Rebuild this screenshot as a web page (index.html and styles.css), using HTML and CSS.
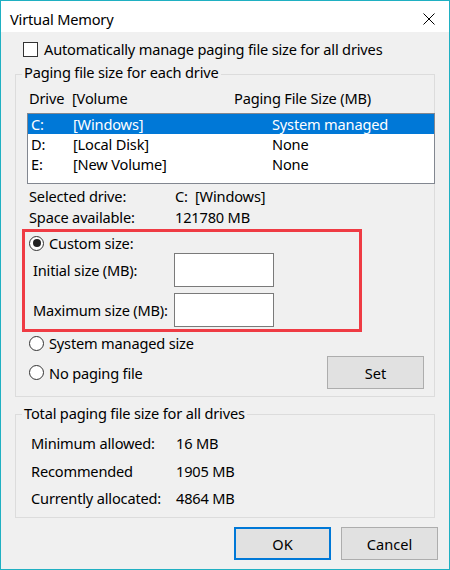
FILE: index.html
```html
<!DOCTYPE html>
<html>
<head>
    <meta charset="UTF-8">
    <title>Virtual Memory</title>
    <link rel="stylesheet" href="styles.css">
</head>
<body>
    <div class="window">
        <div class="titlebar">
            <span class="title">Virtual Memory</span>
            <svg class="close" width="12" height="12" viewBox="0 0 12 12">
                <path d="M0.5 0.5 L11.5 11.5 M11.5 0.5 L0.5 11.5" stroke="#000" stroke-width="1" fill="none"/>
            </svg>
        </div>

        <div class="dialog">
            <label class="check-row">
                <span class="checkbox"></span>
                Automatically manage paging file size for all drives
            </label>

            <fieldset class="group drives">
                <legend>Paging file size for each drive</legend>

                <div class="list-head">
                    <span>Drive</span>
                    <span>[Volume</span>
                    <span>Paging File Size (MB)</span>
                </div>

                <div class="listbox">
                    <div class="list-row selected">
                        <span>C:</span><span>[Windows]</span><span>System managed</span>
                    </div>
                    <div class="list-row">
                        <span>D:</span><span>[Local Disk]</span><span>None</span>
                    </div>
                    <div class="list-row">
                        <span>E:</span><span>[New Volume]</span><span>None</span>
                    </div>
                </div>

                <div class="info-row">
                    <span>Selected drive:</span>
                    <span>C:&nbsp;&nbsp;[Windows]</span>
                </div>
                <div class="info-row">
                    <span>Space available:</span>
                    <span>121780 MB</span>
                </div>

                <div class="custom-box">
                    <div class="radio-row custom">
                        <span class="radio checked"></span>
                        Custom size:
                    </div>
                    <div class="size-row">
                        <span class="size-label">Initial size (MB):</span>
                        <input class="size-input" type="text">
                    </div>
                    <div class="size-row">
                        <span class="size-label">Maximum size (MB):</span>
                        <input class="size-input" type="text">
                    </div>
                </div>

                <div class="radio-row system">
                    <span class="radio"></span>
                    System managed size
                </div>
                <div class="set-row">
                    <div class="radio-row">
                        <span class="radio"></span>
                        No paging file
                    </div>
                    <button class="btn set-btn">Set</button>
                </div>
            </fieldset>

            <fieldset class="group totals">
                <legend>Total paging file size for all drives</legend>
                <div class="total-rows">
                    <span>Minimum allowed:</span><span>16 MB</span>
                    <span>Recommended</span><span>1905 MB</span>
                    <span>Currently allocated:</span><span>4864 MB</span>
                </div>
            </fieldset>

            <div class="buttons">
                <button class="btn default">OK</button>
                <button class="btn">Cancel</button>
            </div>
        </div>
    </div>
</body>
</html>
```

FILE: styles.css
```css
body {
    margin: 0;
    padding: 0;
    font-family: "Segoe UI", "Noto Sans", "Open Sans", sans-serif;
    font-size: 14.6px;
    letter-spacing: -0.18px;
    line-height: 20px;
    color: #000;
}

.window {
    width: 450px;
    height: 570px;
    box-sizing: border-box;
    border: 1px solid #1fb0c2;
    background-color: #f0f0f0;
}

/* title bar */
.titlebar {
    display: flex;
    justify-content: space-between;
    align-items: center;
    height: 31px;
    box-sizing: border-box;
    padding: 4px 14px 0 9px;
    background-color: #fff;
}

.close {
    display: block;
}

.dialog {
    padding: 0 14px;
}

.check-row {
    display: flex;
    align-items: center;
    height: 20px;
    margin-top: 7px;
    padding-left: 8px;
}

.checkbox {
    width: 13px;
    height: 13px;
    border: 1px solid #333;
    background-color: #fff;
    margin-right: 6px;
}

/* group boxes */
.group {
    margin: 3px 0 0 0;
    padding: 0;
    border: 1px solid #dcdcdc;
    min-width: 0;
}

.group legend {
    margin-left: 6px;
    padding: 0 2px 4px 2px;
    line-height: 20px;
}

.list-head,
.list-row {
    display: grid;
    height: 20px;
    white-space: nowrap;
}

.list-head {
    margin: 2px 0 0 13px;
    grid-template-columns: 43px 162px 1fr;
}

.listbox {
    margin: 5px -1px 0 11px;
    height: 71px;
    box-sizing: border-box;
    border: 1px solid #828790;
    background-color: #fff;
}

.list-row {
    padding-left: 3px;
    grid-template-columns: 42px 199px 1fr;
}

.list-row.selected {
    background-color: #0078d7;
    color: #fff;
}

.info-row {
    display: grid;
    grid-template-columns: 146px 1fr;
    height: 21px;
    padding-left: 13px;
}

.listbox + .info-row {
    margin-top: 2px;
}

/* custom size box */
.custom-box {
    width: 340px;
    box-sizing: border-box;
    margin: 1px 0 0 6px;
    padding: 1px 0 2px 8px;
    border: 3px solid #ef3b44;
}

.radio-row {
    display: flex;
    align-items: center;
    height: 20px;
    white-space: nowrap;
}

.radio-row.custom {
    margin-left: -4px;
}

.radio {
    position: relative;
    width: 13px;
    height: 13px;
    border: 1px solid #333;
    border-radius: 50%;
    background-color: #fff;
    margin-right: 5px;
}

.radio.checked::after {
    content: "";
    position: absolute;
    left: 2.5px;
    top: 2.5px;
    width: 8px;
    height: 8px;
    border-radius: 50%;
    background-color: #222;
}

.size-row {
    display: flex;
    align-items: center;
    height: 34px;
}

.size-row + .size-row {
    margin-top: 6px;
}

.size-label {
    width: 141px;
    white-space: nowrap;
}

.size-input {
    width: 100px;
    height: 34px;
    box-sizing: border-box;
    margin: 0;
    border: 1px solid #7a7a7a;
    background-color: #fff;
    font: inherit;
}

.radio-row.system {
    margin: 1px 0 0 13px;
}

.set-row {
    display: flex;
    justify-content: space-between;
    align-items: center;
    height: 33px;
    margin-top: 3px;
    padding: 0 10px 7px 13px;
}

.btn {
    width: 97px;
    height: 33px;
    box-sizing: border-box;
    margin: 0;
    border: 1px solid #adadad;
    background-color: #e1e1e1;
    color: #000;
    font: inherit;
    padding: 0;
}

.btn.default {
    border: 2px solid #0078d7;
}

/* totals */
.group.totals {
    margin-top: 6px;
}

.group.totals legend {
    padding-bottom: 2px;
}

.total-rows {
    display: grid;
    grid-template-columns: 145px 1fr;
    row-gap: 7.5px;
    padding: 8px 0 9px 15px;
}

.buttons {
    display: flex;
    justify-content: flex-end;
    gap: 10px;
    margin: 9px -3px 0 0;
}
```
